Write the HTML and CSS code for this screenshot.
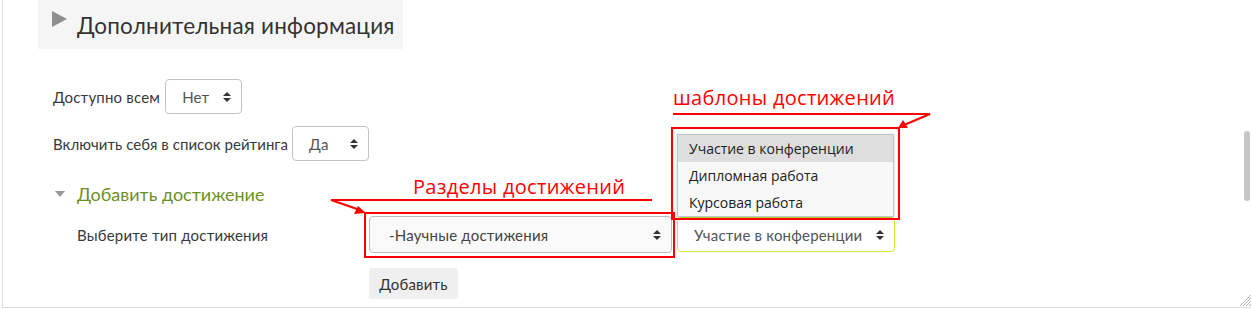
FILE: index.html
```html
<!doctype html>
<html lang="ru">
    <head>
        <meta charset="UTF-8" />
        <title>Дополнительная информация</title>
        <link rel="stylesheet" href="styles.css">
    </head>
    <body>
        <div class="page">
            <div class="section-head">
                <span class="tri-right"></span>
                <h2>Дополнительная информация</h2>
            </div>

            <div class="form">
                <div class="row row-first">
                    <label>Доступно всем</label>
                    <div class="select select-small">
                        <span>Нет</span>
                        <span class="caret"></span>
                    </div>
                </div>

                <div class="row row-second">
                    <label>Включить себя в список рейтинга</label>
                    <div class="select select-small">
                        <span>Да</span>
                        <span class="caret"></span>
                    </div>
                </div>

                <div class="sub-head">
                    <span class="tri-down"></span>
                    <h3>Добавить достижение</h3>
                </div>

                <div class="row row-type">
                    <label class="label-wide">Выберите тип достижения</label>
                    <div class="select select-wide">
                        <span>-Научные достижения</span>
                        <span class="caret"></span>
                    </div>
                    <div class="select select-green">
                        <span>Участие в конференции</span>
                        <span class="caret"></span>
                        <ul class="options">
                            <li class="active">Участие в конференции</li>
                            <li>Дипломная работа</li>
                            <li>Курсовая работа</li>
                        </ul>
                    </div>
                </div>

                <div class="row row-button">
                    <button class="btn">Добавить</button>
                </div>
            </div>

            <!-- annotations drawn over the screenshot -->
            <span class="note note-templates">шаблоны достижений</span>
            <span class="note note-sections">Разделы достижений</span>
            <svg class="marks" width="1251" height="309" viewBox="0 0 1251 309">
                <g fill="none" stroke="#f00" stroke-width="2">
                    <rect x="365" y="213" width="309" height="44" />
                    <rect x="672" y="128" width="227" height="91" />
                    <polyline points="652,200 331,200 360,210" />
                    <polyline points="673,114 930,114 904,125" />
                </g>
                <g fill="#f00">
                    <polygon points="366,213 354,214 358,206" />
                    <polygon points="898,128 903,120 908,128" />
                </g>
            </svg>

            <div class="scrollbar"></div>
            <svg class="grip" width="12" height="12" viewBox="0 0 12 12">
                <g stroke="#b5b5b5" stroke-width="1">
                    <line x1="1" y1="12" x2="12" y2="1" />
                    <line x1="4" y1="12" x2="12" y2="4" />
                    <line x1="7" y1="12" x2="12" y2="7" />
                    <line x1="10" y1="12" x2="12" y2="10" />
                </g>
            </svg>
        </div>
    </body>
</html>
```

FILE: styles.css
```css
* {
    margin: 0;
    padding: 0;
    box-sizing: border-box;
}
body {
    font-family: Lato, "Open Sans", sans-serif;
    background-color: #ffffff;
    color: #373a3c;
    width: 1251px;
    height: 309px;
    overflow: hidden;
}
.page {
    position: relative;
    height: 308px;
    margin-left: 2px;
    border-left: 1px solid #dcdcdc;
    border-bottom: 1px solid #dcdcdc;
}
.section-head {
    display: flex;
    align-items: center;
    margin-left: 35px;
    width: 365px;
    height: 49px;
    padding-left: 14px;
    padding-top: 2px;
    background-color: #f5f5f5;
}
.tri-right {
    width: 0;
    height: 0;
    border-top: 8px solid transparent;
    border-bottom: 8px solid transparent;
    border-left: 15px solid #8f8f8f;
    margin-right: 10px;
    margin-top: -14px;
}
.section-head h2 {
    font-weight: 400;
    font-size: 22.5px;
    color: #333;
    letter-spacing: 0.2px;
}
.form {
    padding-left: 50px;
}
.row {
    display: flex;
    align-items: center;
    font-size: 15px;
    letter-spacing: 0.2px;
}
.row label {
    margin-right: 5px;
}
.row-first {
    margin-top: 30px;
}
.row-second {
    margin-top: 12px;
}
.row-second label {
    letter-spacing: 0.05px;
    margin-right: 4px;
}
.select {
    position: relative;
    display: flex;
    align-items: center;
    justify-content: space-between;
    height: 35px;
    border: 1px solid #bfc4c9;
    border-radius: 4px;
    background-color: #fff;
    color: #555;
    padding: 0 10px 0 16px;
    font-size: 15px;
}
.select-small {
    width: 77px;
}
.caret {
    position: relative;
    width: 8px;
    height: 10px;
}
.caret::before,
.caret::after {
    content: "";
    position: absolute;
    left: 0;
    border-left: 4px solid transparent;
    border-right: 4px solid transparent;
}
.caret::before {
    top: 0;
    border-bottom: 4px solid #333;
}
.caret::after {
    bottom: 0;
    border-top: 4px solid #333;
}
.sub-head {
    display: flex;
    align-items: center;
    margin-top: 22px;
    padding-left: 2px;
}
.tri-down {
    width: 0;
    height: 0;
    border-left: 5px solid transparent;
    border-right: 5px solid transparent;
    border-top: 6px solid #999;
    margin-right: 12px;
}
.sub-head h3 {
    font-weight: 400;
    font-size: 18px;
    color: #6d8f24;
}
.row-type {
    margin-top: 11px;
    padding-left: 24px;
}
.row-type label.label-wide {
    width: 292px;
    margin-right: 0;
}
.select-wide {
    width: 303px;
    height: 37px;
    background-color: #f9f9f9;
    color: #444;
    padding-left: 19px;
    border-color: #b9bcc0;
}
.select-green {
    width: 218px;
    margin-left: 5px;
    border-color: #c8ec3c;
    padding-left: 16px;
    color: #555;
}
.options {
    position: absolute;
    top: -84px;
    left: -1px;
    width: 217px;
    list-style: none;
    background-color: #f8f8f8;
    border: 1px solid #c4c4c4;
    box-shadow: 0 1px 3px rgba(0, 0, 0, 0.2);
    font-family: "Open Sans", sans-serif;
    font-size: 14px;
    letter-spacing: 0;
    color: #222;
}
.options li {
    height: 27px;
    line-height: 27px;
    padding-left: 11px;
}
.options li.active {
    background-color: #dedede;
}
.row-button {
    margin-top: 15px;
    padding-left: 316px;
}
.btn {
    font-family: Lato, "Open Sans", sans-serif;
    font-size: 15px;
    letter-spacing: 0.2px;
    color: #333;
    background-color: #efefef;
    border: none;
    border-radius: 3px;
    width: 89px;
    height: 31px;
}
.note {
    position: absolute;
    font-family: "Open Sans", sans-serif;
    font-size: 20px;
    color: #f00;
    letter-spacing: 0.3px;
    white-space: nowrap;
}
.note-templates {
    left: 670px;
    top: 84px;
}
.note-sections {
    left: 410px;
    top: 173px;
}
.marks {
    position: absolute;
    left: -3px;
    top: 0;
    pointer-events: none;
}
.scrollbar {
    position: absolute;
    left: 1241px;
    top: 131px;
    width: 6px;
    height: 70px;
    border-radius: 3px;
    background-color: #c6c6c6;
}
.grip {
    position: absolute;
    left: 1236px;
    top: 294px;
}
```
